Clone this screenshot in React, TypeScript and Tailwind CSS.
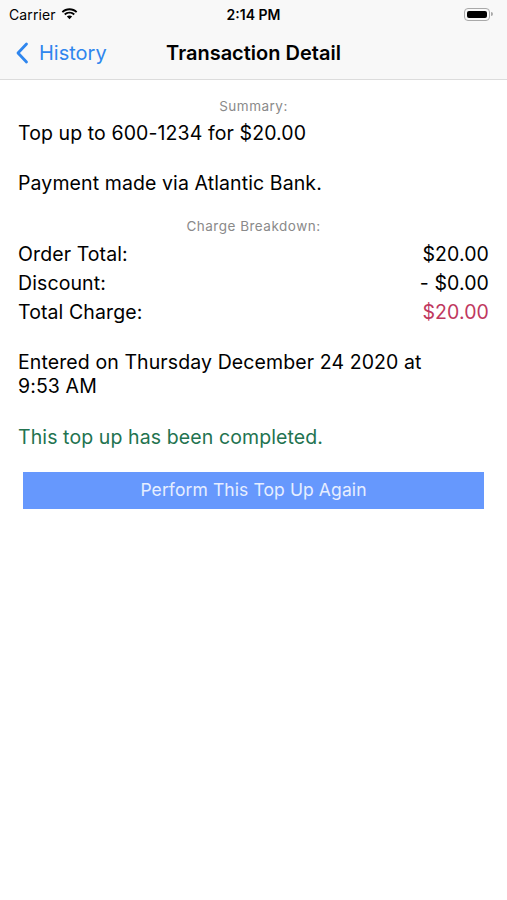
import React from "react";

export default function App() {
  return (
    <div className="w-[507px] h-[900px] bg-white text-black" style={{ fontFamily: "Inter, 'Noto Sans', sans-serif" }}>
      <div className="bg-[#f8f8f8] border-b border-[#dcdcdc]">
        <div className="h-[28px] flex items-center px-[9px] relative">
          <div className="flex items-center gap-[5px] text-[14px] tracking-[0.1px]">
            <span>Carrier</span>
            <svg width="17" height="12" viewBox="0 0 17 12">
              <path d="M8.5 2.2c2.5 0 4.8 1 6.5 2.6l1.3-1.4C14.2 1.4 11.5.2 8.5.2S2.8 1.4.7 3.4L2 4.8c1.7-1.6 4-2.6 6.5-2.6z" fill="#000" />
              <path d="M8.5 5.6c1.6 0 3 .6 4.1 1.6l1.3-1.4C12.5 4.5 10.6 3.7 8.5 3.7S4.5 4.5 3.1 5.8l1.3 1.4c1.1-1 2.5-1.6 4.1-1.6z" fill="#000" />
              <path d="M8.5 7.4c-1 0-1.9.4-2.6 1L8.5 11.3l2.6-2.9c-.7-.6-1.6-1-2.6-1z" fill="#000" />
            </svg>
          </div>
          <div className="absolute left-0 right-0 text-center text-[14px] font-semibold pointer-events-none">2:14 PM</div>
          <div className="ml-auto flex items-center mr-[5px]">
            <div className="w-[26px] h-[13px] rounded-[4px] border border-[#a9a9a9] p-[2px]">
              <div className="w-full h-full bg-black rounded-[2px]" />
            </div>
            <div className="w-[2px] h-[4px] bg-[#a9a9a9] rounded-r-sm ml-[1px]" />
          </div>
        </div>
        <div className="h-[51px] flex items-center relative">
          <div className="flex items-center pl-[15px] text-[#2f86ee] text-[20px] gap-[10px] pb-[2px]">
            <svg width="14" height="22" viewBox="0 0 14 22">
              <path d="M11.5 2 L3 11 L11.5 20" stroke="#2f86ee" strokeWidth="2.8" fill="none" strokeLinecap="round" strokeLinejoin="round" />
            </svg>
            <span>History</span>
          </div>
          <div className="absolute left-0 right-0 text-center text-[20px] font-semibold pb-[2px] pointer-events-none">Transaction Detail</div>
        </div>
      </div>
      <div className="px-[18px] pt-[16px] tracking-[0.1px]">
        <div className="text-center text-[13.5px] tracking-[0.5px] text-[#8a8a8a]">Summary:</div>
        <div className="text-[19.5px] mt-[4px] leading-[26px]">Top up to 600-1234 for $20.00</div>
        <div className="text-[19.5px] mt-[24px] leading-[26px]">Payment made via Atlantic Bank.</div>
        <div className="text-center text-[13.5px] tracking-[0.5px] text-[#8a8a8a] mt-[20px]">Charge Breakdown:</div>
        <div className="text-[19.5px] mt-[4px] flex flex-col gap-[3px]">
          <div className="flex justify-between leading-[26px]"><span>Order Total:</span><span>$20.00</span></div>
          <div className="flex justify-between leading-[26px]"><span>Discount:</span><span>- $0.00</span></div>
          <div className="flex justify-between leading-[26px]"><span>Total Charge:</span><span className="text-[#c0385e]">$20.00</span></div>
        </div>
        <div className="text-[19.5px] mt-[25px] leading-[24px] pr-[40px]">Entered on Thursday December 24 2020 at 9:53 AM</div>
        <div className="text-[19.5px] mt-[26px] leading-[26px] text-[#237350]">This top up has been completed.</div>
        <div className="mx-[5px] mt-[22px] h-[37px] bg-[#6698fd] flex items-center justify-center text-[17.5px] text-[#e6eeff]">Perform This Top Up Again</div>
      </div>
    </div>
  );
}
